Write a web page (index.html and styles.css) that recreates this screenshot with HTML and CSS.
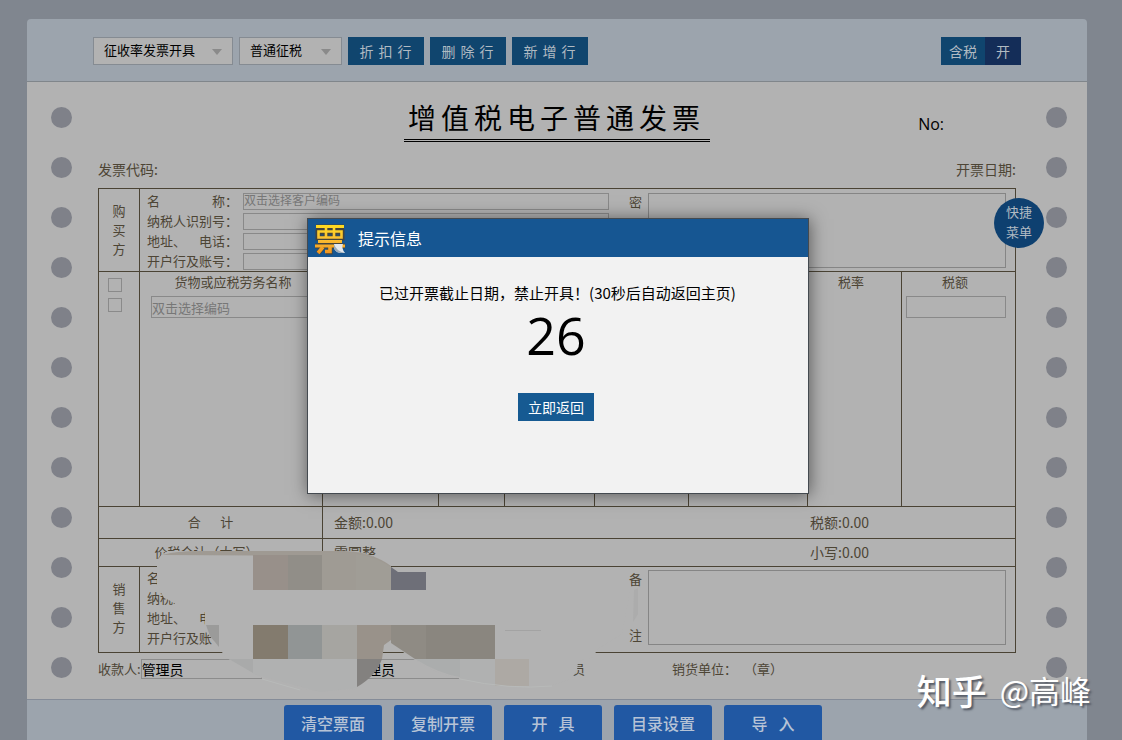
FILE: index.html
```html
<!DOCTYPE html>
<html lang="zh-CN">
<head>
<meta charset="utf-8">
<title>增值税电子普通发票</title>
<link rel="stylesheet" href="styles.css">
</head>
<body>
<div class="panel">
  <header class="toolbar">
    <span class="select-wrap select-wide"><select class="select" aria-label="开具方式"><option>征收率发票开具</option></select></span>
    <span class="select-wrap"><select class="select" aria-label="征税方式"><option>普通征税</option></select></span>
    <button class="tool-btn" type="button">折扣行</button>
    <button class="tool-btn" type="button">删除行</button>
    <button class="tool-btn" type="button">新增行</button>
    <button class="tax-switch" type="button"><span class="tax-label">含税</span><span class="tax-state">开</span></button>
  </header>

  <main class="paper">
    <div class="holes"><i></i><i></i><i></i><i></i><i></i><i></i><i></i><i></i><i></i><i></i><i></i><i></i></div>
    <section class="sheet">
      <div class="heading">
        <h1 class="title">增值税电子普通发票</h1>
        <span class="number">No:</span>
      </div>
      <div class="meta"><span>发票代码:</span><span>开票日期:</span></div>

      <div class="invoice">
        <div class="party">
          <div class="side">购<br>买<br>方</div>
          <div class="fields">
            <div class="field"><label for="b1"><span>名</span><span>称：</span></label><input id="b1" type="text" placeholder="双击选择客户编码"></div>
            <div class="field"><label for="b2">纳税人识别号：</label><input id="b2" type="text"></div>
            <div class="field"><label for="b3"><span>地址、</span><span>电话：</span></label><input id="b3" type="text"></div>
            <div class="field"><label for="b4">开户行及账号：</label><input id="b4" type="text"></div>
          </div>
          <div class="note-label"><span>密</span></div>
          <textarea class="note" aria-label="密码区"></textarea>
        </div>

        <table class="goods">
          <colgroup><col class="c1"><col class="c2"><col class="c3"><col class="c4"><col class="c5"><col class="c6"><col class="c7"><col class="c8"><col class="c9"></colgroup>
          <tbody>
            <tr class="head">
              <td rowspan="2" class="checks"><input type="checkbox" aria-label="全选"><input type="checkbox" aria-label="选择第一行"></td>
              <th class="name-head">货物或应税劳务名称</th><th></th><th></th><th></th><th></th><th></th><th class="tax-head">税率</th><th class="tax-head">税额</th>
            </tr>
            <tr class="items">
              <td class="name-cell"><input type="text" placeholder="双击选择编码" aria-label="货物编码"></td><td></td><td></td><td></td><td></td><td></td><td></td>
              <td class="tax-cell"><input type="text" aria-label="税额"></td>
            </tr>
            <tr class="total">
              <th colspan="2">合&emsp;&ensp;计</th><td colspan="5" class="sum">金额:0.00</td><td colspan="2" class="sum-tax">税额:0.00</td>
            </tr>
            <tr class="words">
              <th colspan="2">价税合计（大写）</th><td colspan="5" class="sum">零圆整</td><td colspan="2" class="sum-tax">小写:0.00</td>
            </tr>
          </tbody>
        </table>

        <div class="party seller">
          <div class="side">销<br>售<br>方</div>
          <div class="fields">
            <div class="field"><p><span>名</span><span>称：</span></p></div>
            <div class="field"><p>纳税人识别号：</p></div>
            <div class="field"><p><span>地址、</span><span>电话：</span></p></div>
            <div class="field"><p>开户行及账号：</p></div>
          </div>
          <div class="note-label"><span>备</span><span>注</span></div>
          <textarea class="note" aria-label="备注"></textarea>
        </div>
      </div>

      <div class="signers">
        <div class="signer"><label for="payee">收款人:</label><input id="payee" type="text" value="管理员"></div>
        <div class="signer"><input type="text" value="管理员" aria-label="复核"></div>
        <div class="signer">员</div>
        <div class="signer seal"><span>销货单位：</span><span>（章）</span></div>
      </div>

      <svg class="redaction" width="500" height="152" viewBox="150 540 500 152" aria-hidden="true">
        <path fill="#b2b2b2" d="M157 562Q160 553 170 551L350 551Q376 553 392 568L628 568L628 578L631 586L622 634L596 650L595 657L578 661L577 671L571 679L550 686L500 686L458 678Q430 674 391 643V640L384 645Q382 668 356 689L300 690L262 678L225 657L219 647L205 630V610L180 608L173 602L164 598L157 585Z"/>
        <path fill="#9f9a93" d="M162 555Q175 551 200 551H345Q372 552 391 566V568H380L345 556Z"/>
        <path fill="#98908a" d="M253 555h35v35h-35z"/>
        <path fill="#918e88" d="M288 555h34v35h-34z"/>
        <path fill="#9f9b94" d="M322 553h34v37h-34z"/>
        <path fill="#a09d96" d="M356 554Q377 557 391 567V590H356z"/>
        <path fill="#6e6f78" d="M391 567L398 572H426V590H391z"/>
        <path fill="#837b6e" d="M253 625h35v34h-35z"/>
        <path fill="#919595" d="M288 625h34v34h-34z"/>
        <path fill="#a6a5a1" d="M322 625h35v34h-35z"/>
        <path fill="#99928a" d="M357 625h34v15L384 645L382 659H357z"/>
        <path fill="#83817f" d="M357 659H382Q376 676 357 687z"/>
        <path fill="#8f8b84" d="M391 625H426V659H415L391 643z"/>
        <path fill="#8a867f" d="M426 625h69v34h-69z"/>
        <path fill="#9b9b9a" d="M206 625H219V647L210 636z"/>
        <path fill="#a9aaaa" d="M229 659H253V673z"/>
        <path fill="#b0b1b1" d="M253 659H357V688L320 692L253 674z"/>
        <path fill="#abadad" d="M415 659H460V677Q440 674 415 659z"/>
        <path fill="#b0b1b1" d="M460 659H495V686L460 678z"/>
        <path fill="#ada9a4" d="M495 659h34v27h-34z"/>
        <path fill="#a3a3a3" d="M505 630h36v1h-36z"/>
        <path fill="#acacac" d="M634 590l4-2v26l-5 8z"/>
        <path fill="none" stroke="#b8bab9" d="M262 679L300 690M460 679Q510 690 552 686"/>
      </svg>
    </section>
    <div class="holes"><i></i><i></i><i></i><i></i><i></i><i></i><i></i><i></i><i></i><i></i><i></i><i></i></div>
    <button class="quick" type="button">快捷<br>菜单</button>
  </main>

  <footer class="actions">
    <button type="button">清空票面</button>
    <button type="button">复制开票</button>
    <button type="button">开&nbsp;&nbsp;&nbsp;具</button>
    <button type="button">目录设置</button>
    <button type="button">导&nbsp;&nbsp;&nbsp;入</button>
  </footer>

  <div class="overlay">
    <div class="dialog" role="dialog" aria-labelledby="dlg-title">
      <div class="dialog-head">
        <svg class="logo" width="32" height="32" viewBox="0 0 32 32" aria-hidden="true">
          <defs><linearGradient id="gold" gradientUnits="userSpaceOnUse" x1="0" y1="2" x2="0" y2="30"><stop offset="0" stop-color="#ffdc20"/><stop offset=".5" stop-color="#fbc033"/><stop offset="1" stop-color="#f0951f"/></linearGradient></defs>
          <g fill="none" stroke="#44443c" stroke-width="5">
            <path d="M2 4H30M4 9H28V15H4ZM12 4V15M20 4V15M4 18.500H28M1 23H31M16 23V29H12M9 24L4 30"/>
          </g>
          <g fill="none" stroke="url(#gold)" stroke-width="3">
            <path d="M2 3.500H30"/>
            <path stroke-width="2.600" d="M4.500 8.500H27.500V14.500H4.500ZM12 4V14M20 4V14"/>
            <path d="M4 18.500H28M1 23H31"/>
            <path stroke-width="3.600" d="M16 23V28.500H11M9 24L4 30"/>
          </g>
          <path fill="#e3e8ed" d="M20 21H29Q27 25 31 30H26Q19 29 20 21Z"/>
          <path fill="#9babb9" d="M20 21Q22 28 31 30H26Q19 29 20 21Z"/>
        </svg>
        <h2 id="dlg-title">提示信息</h2>
      </div>
      <div class="dialog-body">
        <p class="message">已过开票截止日期，禁止开具！(30秒后自动返回主页)</p>
        <p class="count">26</p>
        <button class="return" type="button">立即返回</button>
      </div>
    </div>
  </div>
</div>
<div class="watermark"><span class="brand">知乎</span><span>@高峰</span></div>
</body>
</html>
```
FILE: styles.css
```css
* { box-sizing: border-box; }
body {
  margin: 0;
  min-height: 100vh;
  padding: 19px 35px 0 27px;
  position: relative;
  background: #80868f;
  font: 13px/20px "Noto Sans CJK SC", sans-serif;
  color: #4d4535;
}
html, body { height: 100vh; overflow: hidden; }
h1, h2, p { margin: 0; font-weight: 400; }
button, input, select, textarea {
  font: inherit;
  color: inherit;
  margin: 0;
  padding: 0;
  border: 0;
  border-radius: 0;
  background: transparent;
}
button { white-space: nowrap; }

.panel {
  position: relative;
  background: #9ca4ad;
  border-radius: 4px 4px 0 0;
}

/* toolbar */
.toolbar {
  display: flex;
  align-items: center;
  gap: 6px;
  padding: 18px 66px 16px;
  border-bottom: 1px solid #80868b;
}
.select-wrap { position: relative; width: 103px; }
.select-wide { width: 140px; }
.select-wrap::after {
  content: "";
  position: absolute;
  right: 11px;
  top: 12px;
  border: 5px solid transparent;
  border-top: 6px solid #8a8a8a;
  border-bottom: 0;
  pointer-events: none;
}
.select {
  display: block;
  appearance: none;
  width: 100%;
  height: 28px;
  padding: 0 10px 2px;
  border: 1px solid #858b92;
  background: #b2b2b2;
  color: #000;
}
.tool-btn {
  width: 76px;
  height: 28px;
  padding-left: 4px;
  background: #10456e;
  color: #b0bac2;
  font-size: 14px;
  letter-spacing: 5px;
}
.tax-switch {
  display: flex;
  margin-left: auto;
  font-size: 14px;
  line-height: 28px;
  color: #b0bac2;
}
.tax-label { padding: 0 8px; background: #10456e; }
.tax-state { padding: 0 11px; background: #142d58; }

/* paper */
.paper {
  position: relative;
  display: grid;
  grid-template-columns: 71px minmax(0, 1fr) 71px;
  background: #b2b2b2;
}
.holes {
  display: flex;
  flex-direction: column;
  gap: 29px;
  padding: 25px 0 21px 24px;
}
.holes:last-of-type { padding-left: 30px; }
.holes i {
  width: 21px;
  height: 21px;
  border-radius: 50%;
  background: #7f8189;
}
.sheet { position: relative; }
.heading { position: relative; display: flex; justify-content: center; padding-top: 15px; }
.title {
  padding: 0 5px 2px 4px;
  border-bottom: 3px double #000;
  color: #000;
  font-size: 28px;
  line-height: 40px;
  letter-spacing: 5px;
}
.number {
  position: absolute;
  right: 72px;
  top: 32px;
  color: #000;
  font: 16px/20px "Open Sans", sans-serif;
}
.meta {
  display: flex;
  justify-content: space-between;
  padding: 17px 0 9px;
  font-size: 14px;
}
.invoice { border: 1px solid #4a4334; }

.party {
  display: grid;
  grid-template-columns: 41px minmax(0, 1fr) 34px 363px;
  padding-right: 9px;
}
.side {
  display: grid;
  place-content: center;
  padding-bottom: 2px;
  border-right: 1px solid #4a4334;
  line-height: 19px;
}
.seller .side { padding-bottom: 4px; }
.fields { padding: 2px 0 0 7px; }
.seller .fields { padding-top: 1px; }
.field { display: flex; align-items: center; gap: 5px; height: 20px; }
.field label, .field p { display: flex; justify-content: space-between; width: 91px; }
.field input {
  flex: 1;
  height: 17px;
  padding-bottom: 2px;
  border: 1px solid #898989;
  font-size: 12px;
}
input::placeholder { color: #777; opacity: 1; }
.note-label {
  display: flex;
  flex-direction: column;
  justify-content: space-between;
  padding: 3px 0 7px 20px;
}
.seller .note-label { padding-top: 2px; }
.note {
  height: 75px;
  margin: 4px 0 3px 5px;
  border: 1px solid #858585;
  resize: none;
}
.seller .note { margin-top: 3px; margin-bottom: 7px; }

/* goods table */
.goods {
  width: 100%;
  table-layout: fixed;
  border-collapse: separate;
  border-spacing: 0;
  border-top: 1px solid #4a4334;
}
.c1 { width: 41px; }
.c2 { width: 183px; }
.c3 { width: 116px; }
.c4 { width: 66px; }
.c5 { width: 90px; }
.c6 { width: 94px; }
.c7 { width: 119px; }
.c8 { width: 94px; }
.goods th, .goods td {
  padding: 0;
  font-weight: 400;
  vertical-align: top;
  border-right: 1px solid #4a4334;
}
.goods .head > :last-child, .goods .items > :last-child, .goods .sum, .goods .sum-tax { border-right: 0; }
.goods .head { height: 24px; }
.goods .name-head { padding-left: 4px; }
.goods .tax-head { padding-right: 7px; }
.goods .items { height: 211px; }
.goods .items td, .goods .checks, .goods .total > *, .goods .words > * { border-bottom: 1px solid #4a4334; }
.goods .checks { padding: 6px 0 0 9px; }
.checks input {
  display: block;
  appearance: none;
  width: 14px;
  height: 14px;
  margin-bottom: 6px;
  border: 1px solid #8a8a8a;
}
.goods td input[type="text"] {
  display: block;
  width: 100%;
  height: 22px;
  border: 1px solid #898989;
}
.goods .name-cell { padding-left: 11px; }
.goods .name-cell input { border-right: 0; }
.goods .tax-cell { padding: 0 9px 0 4px; }
.goods .total > * { height: 32px; padding-bottom: 2px; vertical-align: middle; }
.goods .words > * { height: 28px; padding-bottom: 2px; vertical-align: middle; }
.goods .words th { padding-right: 8px; }
.goods .sum { padding-left: 11px; font-size: 14px; }
.goods .sum-tax { padding-left: 2px; font-size: 14px; }

.signers {
  display: grid;
  grid-template-columns: 254fr 220fr 100fr 344fr;
  padding-top: 6px;
  align-items: center;
}
.signer { display: flex; align-items: center; }
.signer input {
  width: 121px;
  height: 20px;
  border: 1px solid #8c8c8c;
  color: #000;
  font-size: 14px;
}
.signer:nth-child(2) input { width: 107px; }
.seal { gap: 7px; }
.redaction { position: absolute; left: 52px; top: 458px; }

.quick {
  position: absolute;
  right: 43px;
  top: 116px;
  width: 50px;
  height: 50px;
  padding-bottom: 2px;
  border-radius: 50%;
  background: #0e4070;
  color: #b0bac2;
}

/* bottom actions */
.actions {
  display: flex;
  justify-content: center;
  gap: 12px;
  padding: 5px 8px 0 0;
  border-top: 1px solid #858c98;
}
.actions button {
  width: 98px;
  height: 38px;
  padding-bottom: 2px;
  border-radius: 3px;
  background: #2158a3;
  color: #b6c3d6;
  font-size: 16px;
  font-weight: 500;
}

/* dialog */
.overlay {
  position: absolute;
  inset: 0;
  display: flex;
  justify-content: center;
  align-items: flex-start;
  padding: 199px 0 0 2px;
}
.dialog {
  width: 502px;
  border: 1px solid #444a50;
  background: #f2f2f2;
  box-shadow: 1px 1px 16px rgba(0, 0, 0, 0.5);
}
.dialog-head {
  display: flex;
  align-items: center;
  gap: 12px;
  height: 38px;
  padding: 0 0 1px 6px;
  background: #165692;
  color: #fff;
}
.dialog-head h2 { font-size: 16px; }
.logo { display: block; margin-top: 3px; }
.dialog-body {
  display: flex;
  flex-direction: column;
  align-items: center;
  padding: 26px 4px 72px 0;
  color: #000;
}
.message { padding-left: 3px; font-size: 15px; }
.count { font: 52px/64px "Open Sans", sans-serif; }
.return {
  width: 76px;
  height: 28px;
  margin-top: 26px;
  background: #165a92;
  color: #fff;
  font-size: 14px;
}

.watermark {
  position: absolute;
  right: 31px;
  bottom: 30px;
  display: flex;
  align-items: center;
  gap: 13px;
  color: #fff;
  font-size: 31px;
  line-height: 40px;
  text-shadow: 2px 2px 2px #555b66;
}
.brand { font-size: 35px; font-weight: 500; }
```
